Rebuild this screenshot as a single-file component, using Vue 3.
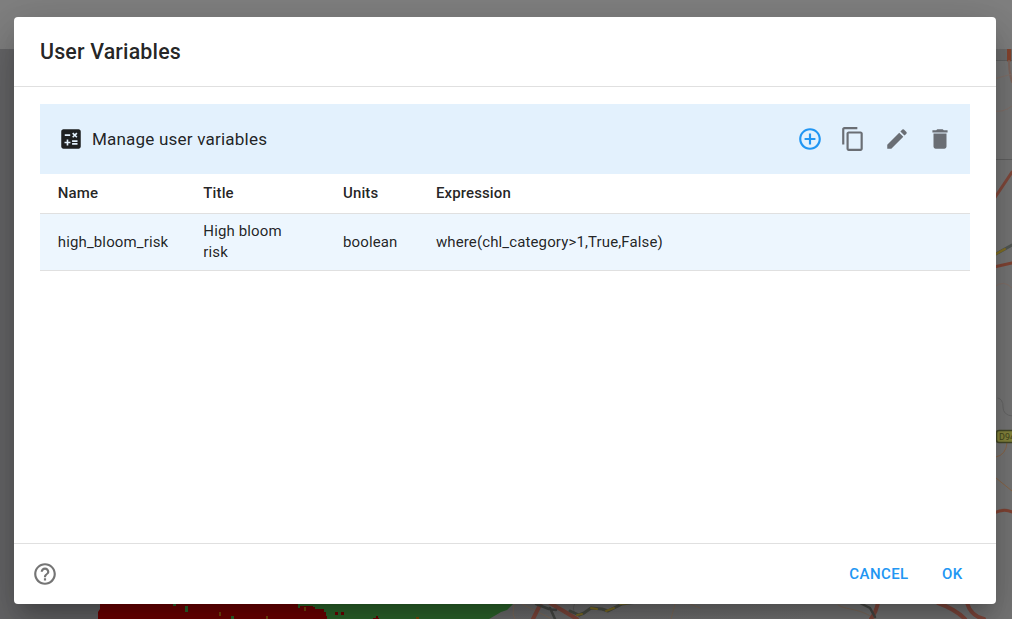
<script setup>
const variables = [
  {
    name: 'high_bloom_risk',
    title: 'High bloom risk',
    units: 'boolean',
    expression: 'where(chl_category>1,True,False)',
  },
]
</script>

<template>
  <div class="screen">
    <svg class="map" viewBox="0 0 1012 619" aria-hidden="true">
      <defs>
        <linearGradient id="land">
          <stop offset="0.2" stop-color="#666668" />
          <stop offset="0.8" stop-color="#787878" />
        </linearGradient>
      </defs>
      <rect width="1012" height="619" fill="url(#land)" />
      <rect x="990" y="49" width="22" height="11" fill="#6e6e6e" />
      <path d="M990 60.500H1012M990 159.500H1012" stroke="#626262" fill="none" />
      <path d="M190 619V604H513L510 607L507 610L501 612L496 615L489 619Z" fill="#2d692d" />
      <path d="M98 619V612L100 609V604H298V606H313V607H315V609H324V612H326V616H327V619Z" fill="#720000" />
      <g fill="#2d692d">
        <path d="M173 604h3v2h-3zM185 606h3v6h-3zM231 616h3v3h-3zM298 604h2v4h-2z" />
      </g>
      <path d="M335 612h3v3h-3zM341 612h3v3h-3zM373 618h6v1h-6zM376 616h2v3h-2z" fill="#720000" />
      <path d="M219 612h2v4h-2zM266 616h2v3h-2zM304 607h2v4h-2zM416 617h3v2h-3z" fill="#7a4b0c" />
      <g fill="none" stroke-linecap="round" stroke-linejoin="round">
        <path d="M514 604L513 614L515 619M522 604L550 618M675 604L671 619M690 604L700 608M838 605C848 611 858 607 875 619" stroke="#84705f" stroke-width="1" />
        <path d="M575 603C572 609 573 613 580 617" stroke="#626262" />
        <path d="M541 603L533 619M550 603L577 619M878 603Q876 612 871 619M938 603Q955 609 965 619M967 603Q971 616 984 619" stroke="#844a3e" stroke-width="4" />
        <path d="M536 604L549 609L556 610M550 608L555 619M860 603L870 608L875 617" stroke="#494b47" stroke-width="2.500" />
        <path d="M570 611L579 615L584 613L591 608L602 609L608 611L622 604L645 601" stroke="#4e5147" stroke-width="3" />
        <path d="M577 615L582 614M591 608L597 609M606 611L614 608M620 604L630 603" stroke="#827126" stroke-width="2" />
        <path d="M990 205L1012 172" stroke="#844a3c" stroke-width="3" />
        <path d="M1009 49V60" stroke="#87452f" stroke-width="4" />
        <path d="M1009 61Q1009 73 1012 82" stroke="#80675e" stroke-width="2" />
        <path d="M994 111Q1003 113 1012 106M994 79L1012 74M994 287Q1004 279 1012 288" stroke="#84726a" stroke-width="1" />
        <path d="M994 255L1012 245" stroke="#545954" stroke-width="3" />
        <path d="M994 255L1005 249" stroke="#857225" stroke-width="2" />
        <path d="M994 267L1012 263" stroke="#844635" stroke-width="3" />
        <path d="M998 398Q1003 399 1003 407T1012 416" stroke="#686868" />
        <path d="M1007 443Q1006 455 996 457M996 478L1012 491" stroke="#8d6849" />
        <path d="M994 513Q1004 508 1012 512" stroke="#844535" stroke-width="3" />
      </g>
      <rect x="996.500" y="430.500" width="22" height="12" rx="2.500" fill="#88883e" stroke="#454a28" stroke-width="1.500" />
      <text x="999" y="440" class="road-label">D94</text>
      <rect width="1012" height="49" fill="#808080" />
    </svg>

    <section class="dialog" role="dialog" aria-labelledby="dialog-title">
      <header class="dialog-header">
        <h2 id="dialog-title">User Variables</h2>
      </header>

      <main class="content">
        <div class="toolbar">
          <svg class="calc" viewBox="0 0 24 24" fill="currentColor">
            <path d="M19 3H5c-1.100 0-2 .9-2 2v14c0 1.100.9 2 2 2h14c1.100 0 2-.9 2-2V5c0-1.100-.9-2-2-2zm-5.970 4.060L14.090 6l1.410 1.410L16.910 6l1.060 1.060-1.410 1.410 1.410 1.410-1.060 1.060-1.410-1.400-1.410 1.410-1.060-1.060 1.410-1.410-1.410-1.420zM6.250 7.720h5v1.500h-5v-1.500zM11.500 16h-2v2H8v-2H6v-1.500h2v-2h1.500v2h2V16zm6.500 1.250h-5v-1.500h5v1.500zm0-2.500h-5v-1.500h5v1.500z" />
          </svg>
          <span class="toolbar-title">Manage user variables</span>
          <div class="actions">
            <button class="icon-button primary" aria-label="Add">
              <svg viewBox="0 0 24 24" fill="currentColor"><path d="M13 7h-2v4H7v2h4v4h2v-4h4v-2h-4V7zm-1-5C6.480 2 2 6.480 2 12s4.480 10 10 10 10-4.480 10-10S17.520 2 12 2zm0 18c-4.410 0-8-3.590-8-8s3.590-8 8-8 8 3.590 8 8-3.590 8-8 8z" /></svg>
            </button>
            <button class="icon-button" aria-label="Duplicate">
              <svg viewBox="0 0 24 24" fill="currentColor"><path d="M16 1H4c-1.100 0-2 .9-2 2v14h2V3h12V1zm3 4H8c-1.100 0-2 .9-2 2v14c0 1.100.9 2 2 2h11c1.100 0 2-.9 2-2V7c0-1.100-.9-2-2-2zm0 16H8V7h11v14z" /></svg>
            </button>
            <button class="icon-button" aria-label="Edit">
              <svg viewBox="0 0 24 24" fill="currentColor"><path d="M3 17.250V21h3.750L17.810 9.940l-3.750-3.750L3 17.250zM20.710 7.040c.39-.39.39-1.020 0-1.410l-2.340-2.340a.9959.9959 0 0 0-1.410 0l-1.830 1.830 3.750 3.750 1.830-1.830z" /></svg>
            </button>
            <button class="icon-button" aria-label="Delete">
              <svg viewBox="0 0 24 24" fill="currentColor"><path d="M6 19c0 1.100.9 2 2 2h8c1.100 0 2-.9 2-2V7H6v12zM19 4h-3.500l-1-1h-5l-1 1H5v2h14V4z" /></svg>
            </button>
          </div>
        </div>

        <table>
          <colgroup>
            <col class="col-name" />
            <col class="col-title" />
            <col class="col-units" />
            <col />
          </colgroup>
          <thead>
            <tr><th>Name</th><th>Title</th><th>Units</th><th>Expression</th></tr>
          </thead>
          <tbody>
            <tr v-for="v in variables" :key="v.name">
              <td>{{ v.name }}</td>
              <td class="title-cell">{{ v.title }}</td>
              <td>{{ v.units }}</td>
              <td>{{ v.expression }}</td>
            </tr>
          </tbody>
        </table>
      </main>

      <footer class="dialog-footer">
        <button class="icon-button help" aria-label="Help">
          <svg viewBox="0 0 24 24" fill="currentColor"><path d="M11 18h2v-2h-2v2zm1-16C6.480 2 2 6.480 2 12s4.480 10 10 10 10-4.480 10-10S17.520 2 12 2zm0 18c-4.410 0-8-3.590-8-8s3.590-8 8-8 8 3.590 8 8-3.590 8-8 8zm0-14c-2.210 0-4 1.790-4 4h2c0-1.100.9-2 2-2s2 .9 2 2c0 2-3 1.750-3 5h2c0-2.250 3-2.500 3-5 0-2.210-1.790-4-4-4z" /></svg>
        </button>
        <button class="text-button cancel">CANCEL</button>
        <button class="text-button">OK</button>
      </footer>
    </section>
  </div>
</template>

<style>
body { overflow: hidden; }
</style>

<style scoped>
.screen {
  position: relative;
  box-sizing: border-box;
  width: 1012px;
  height: 619px;
  padding: 17px 16px 15px 14px;
  overflow: hidden;
  font-family: Roboto, sans-serif;
  color: rgba(0, 0, 0, 0.87);
}
.map { position: absolute; inset: 0; width: 1012px; height: 619px; }
.road-label { font: 9px Roboto, sans-serif; fill: #45471f; }
.dialog {
  position: relative;
  display: flex;
  flex-direction: column;
  height: 587px;
  background: #fff;
  border-radius: 4px;
  box-shadow: 0 12px 16px -8px rgba(0, 0, 0, 0.2), 0 26px 41px 3px rgba(0, 0, 0, 0.14), 0 10px 50px 9px rgba(0, 0, 0, 0.12);
}
.dialog-header {
  box-sizing: border-box;
  height: 70px;
  padding: 1px 26px 0;
  border-bottom: 1px solid #e0e0e0;
  display: flex;
  align-items: center;
}
h2 { margin: 0; font-size: 21.400px; font-weight: 500; line-height: 34px; letter-spacing: 0.16px; }
.content { flex: 1; padding: 17px 26px 0; }
.toolbar {
  display: flex;
  align-items: center;
  height: 70px;
  box-sizing: border-box;
  padding: 0 17.300px 0 17.700px;
  background: #e3f1fd;
}
.calc { width: 26px; height: 26px; }
.toolbar-title { margin-left: 8.200px; font-size: 17.100px; letter-spacing: 0.18px; }
.actions { display: flex; gap: 17.200px; margin-left: auto; }
.icon-button { display: flex; padding: 0; border: 0; background: none; color: #6a6e74; }
.icon-button svg { width: 26px; height: 26px; }
.icon-button.primary { color: #2196f3; }
table { width: 100%; table-layout: fixed; border-collapse: separate; border-spacing: 0; font-size: 15px; line-height: 21px; letter-spacing: 0.13px; }
.col-name { width: 145.500px; }
.col-title { width: 139.700px; }
.col-units { width: 92.900px; }
th, td { box-sizing: border-box; padding: 0 0 0 17.800px; border-bottom: 1px solid #e0e0e0; text-align: left; }
th { height: 40px; font-weight: 500; }
td { height: 57px; background: #edf6fe; }
td.title-cell { padding-right: 30px; }
.dialog-footer {
  box-sizing: border-box;
  display: flex;
  align-items: center;
  height: 61px;
  padding: 0 33.300px 0 17.700px;
  border-top: 1px solid #e0e0e0;
}
.help { margin-right: auto; color: #757575; }
.text-button { padding: 0; border: 0; background: none; color: #2196f3; font: 500 15px Roboto, sans-serif; letter-spacing: 0.43px; }
.cancel { margin-right: 33.400px; }
</style>
